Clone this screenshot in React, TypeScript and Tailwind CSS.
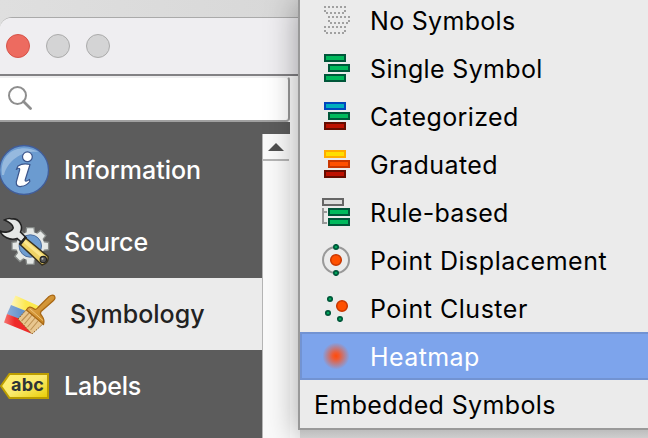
import type { ReactNode } from 'react';

function SearchIcon() {
  return (
    <svg width="26" height="26" viewBox="0 0 26 26" fill="none" stroke="#8e8e8e">
      <circle cx="11.5" cy="9.5" r="8.5" strokeWidth="2" />
      <path d="M17.5 15.5 L24.5 22.5" strokeWidth="2.8" strokeLinecap="round" />
    </svg>
  );
}

function InfoIcon() {
  return (
    <svg width="56" height="56" viewBox="0 0 56 56">
      <circle cx="24" cy="28" r="24.5" fill="#6b9bd0" stroke="#415d99" strokeWidth="1.3" />
      <path d="M2 33 C-1 10 20 0 39 10 C24 8 8 17 4 33 Z" fill="#96b9de" />
      <g stroke="#3c568c" strokeWidth="1.2" fill="#fff" strokeLinejoin="round">
        <circle cx="27.4" cy="14.8" r="4.9" />
        <path d="M18 24 C21 22 26 21.5 30 22.5 L25.3 37.5 C24.6 40 26.5 39.5 29.5 37.5 L29.8 39.5 C26 44.5 15.5 47.5 16.3 40 L19.6 28 C20.1 25.5 18.3 26 16.3 27.4 Z" />
      </g>
    </svg>
  );
}

const TEETH = [0, 45, 90, 135, 180, 225, 270, 315];

function SourceIcon() {
  return (
    <svg width="56" height="56" viewBox="0 0 56 56">
      <g transform="translate(30.3 32)">
        {TEETH.map((a) => (
          <path key={a} transform={`rotate(${a})`} d="M-4.5 -12 L-3.7 -18.3 H3.7 L4.5 -12 Z" fill="#e5e8e6" stroke="#858987" strokeWidth="1.3" />
        ))}
        <circle r="14" fill="#e5e8e6" />
        <circle r="11.2" fill="#6f9dd0" stroke="#4d6e9d" />
      </g>
      <path d="M12 5 C19 4 23.5 12 20.5 18 L26 23.5 L22 28.5 L17 24.5 C10 27 2 22.5 0 17 C4 19 11 18.5 13 14.5 C14 11 9 8 4.5 6 C7 4.5 10 4.3 12 5 Z" fill="#e5e7e6" stroke="#222" strokeWidth="1.6" />
      <path d="M25 23.5 L48 42.5 Q49 49 42 51 L19.5 30 Z" fill="#efd365" stroke="#39311d" strokeWidth="1.5" />
      <path d="M23.5 26.5 L43 43" stroke="#fbe68c" strokeWidth="3" />
      <path d="M26 23 L20 30.5" stroke="#242424" strokeWidth="2.4" />
      <circle cx="43.3" cy="45.5" r="3.2" fill="#555" stroke="#222" strokeWidth="1.2" />
      <circle cx="42.5" cy="44.8" r="1" fill="#bbb" />
    </svg>
  );
}

function BrushIcon() {
  return (
    <svg className="relative top-px" width="62" height="56" viewBox="0 0 62 56">
      <defs>
        <linearGradient id="yellowPaint"><stop stopColor="#fff6bd" /><stop offset=".5" stopColor="#fce94f" /></linearGradient>
        <linearGradient id="bluePaint"><stop stopColor="#8cadd6" /><stop offset=".5" stopColor="#6593cb" /></linearGradient>
        <linearGradient id="redPaint"><stop stopColor="#f57571" /><stop offset=".4" stopColor="#ef2929" /></linearGradient>
        <linearGradient id="wood" x1="0" y1="0" x2="1" y2="1"><stop stopColor="#e8b05a" /><stop offset="1" stopColor="#bd7910" /></linearGradient>
      </defs>
      <path d="M15.5 8.5 L41 20 L35 28 L11 18 Z" fill="url(#yellowPaint)" />
      <path d="M11 18 L36 28 L28 37 L7 27 Z" fill="url(#bluePaint)" />
      <path d="M7 27 L28 35 L31 46.5 L4 35.5 Z" fill="url(#redPaint)" />
      <path d="M18 32 L27 22 L44 36 L32 47 Z" fill="#e8c68f" stroke="#8e5b19" strokeDasharray="1.5 1" />
      <path d="M21.5 34 L29 26 M24.5 37 L32 28 M27.5 40 L35 31 M30.5 43 L38 34" stroke="#bd9153" strokeWidth="1.1" />
      <path d="M26.5 23 Q29 18 33.5 21.5 Q36 23.5 38 20.5 L49 9.5 Q52.500 7 54.500 9 Q56 11.500 53 14 L41 24.500 Q39.500 27 42 29 Q45 33 43.500 37.500 Z" fill="url(#wood)" stroke="#a86714" strokeWidth="1.2" />
      <path d="M30 22 L43 33.500" stroke="#f0c47b" strokeWidth="1" />
    </svg>
  );
}

function TagIcon() {
  return (
    <div className="relative flex h-7 w-14 items-center">
      <svg className="absolute left-0 top-0" width="56" height="28" viewBox="0 0 56 28">
        <defs>
          <linearGradient id="tag" x1="0" y1="0" x2="1" y2="1"><stop stopColor="#fff071" /><stop offset=".5" stopColor="#fbeb70" /><stop offset="1" stopColor="#e8cc00" /></linearGradient>
        </defs>
        <path d="M1 14 L9.5 2 H48 V26 H9.5 Z" fill="url(#tag)" stroke="#bd9e00" strokeWidth="2" />
      </svg>
      <span className="relative -top-px ml-[11px] text-[18px] leading-none font-bold tracking-[0.2px] text-[#2e3436]">abc</span>
    </div>
  );
}

function Bars({ colors }: { colors: [string, string][] }) {
  return (
    <svg width="28" height="28" viewBox="0 0 28 28">
      {colors.map(([fill, stroke], i) => (
        <rect key={i} x={i === 1 ? 7 : 3} y={1 + i * 10} width="20" height="6" fill={fill} stroke={stroke} strokeWidth="2" />
      ))}
    </svg>
  );
}

function NoSymbolsIcon() {
  return (
    <svg width="28" height="28" viewBox="0 0 28 28" fill="none" stroke="#a0a0a0" strokeWidth="2" strokeDasharray="2 2">
      <path d="M2 1 H24 M2 5 H4 M22 5 H24 M4 7 H24 M6 11 H28 M6 15 H8 M26 15 H28 M8 17 H28 M2 21 H24 M2 25 H4 M22 25 H24 M4 27 H24" />
    </svg>
  );
}

function RuleIcon() {
  return (
    <svg width="28" height="28" viewBox="0 0 28 28" strokeWidth="2">
      <rect x="1" y="1" width="20" height="6" fill="#ddd" stroke="#666" />
      <path d="M1 10 V25 H5 M1 14 H5" fill="none" stroke="#999" />
      <rect x="7" y="11" width="20" height="6" fill="#00b95c" stroke="#00573a" />
      <rect x="7" y="21" width="20" height="6" fill="#00b95c" stroke="#00573a" />
    </svg>
  );
}

function DisplacementIcon() {
  return (
    <svg width="28" height="32" viewBox="0 0 28 32">
      <circle cx="14" cy="16" r="13" fill="none" stroke="#999" strokeWidth="2" />
      <circle cx="14" cy="16" r="5.3" fill="#ff5000" stroke="#c93700" strokeWidth="1.5" />
      <circle cx="14" cy="3" r="2.2" fill="#00a55a" stroke="#00573a" strokeWidth="1.7" />
      <circle cx="14" cy="29" r="2.2" fill="#00a55a" stroke="#00573a" strokeWidth="1.7" />
    </svg>
  );
}

function ClusterIcon() {
  return (
    <svg width="28" height="28" viewBox="0 0 28 28">
      <circle cx="20" cy="12" r="5.3" fill="#ff5000" stroke="#c93700" strokeWidth="1.5" />
      {[[8, 5], [6, 19], [18, 25]].map(([x, y]) => (
        <circle key={x} cx={x} cy={y} r="2.2" fill="#00a55a" stroke="#00573a" strokeWidth="1.7" />
      ))}
    </svg>
  );
}

function HeatIcon() {
  return (
    <svg width="28" height="28" viewBox="0 0 28 28">
      <defs>
        <radialGradient id="heat"><stop stopColor="#ff4b0a" /><stop offset=".25" stopColor="#f05a30" /><stop offset="1" stopColor="#f05a30" stopOpacity="0" /></radialGradient>
      </defs>
      <circle cx="14" cy="14" r="13.5" fill="url(#heat)" />
    </svg>
  );
}

const green: [string, string] = ['#00b95c', '#00573a'];
const red: [string, string] = ['#bd1000', '#650c00'];

const menu: { label: string; icon: ReactNode; spacing: string; selected?: boolean }[] = [
  { label: 'No Symbols', icon: <NoSymbolsIcon />, spacing: 'tracking-[0.3px]' },
  { label: 'Single Symbol', icon: <Bars colors={[green, green, green]} />, spacing: 'tracking-[0.35px]' },
  { label: 'Categorized', icon: <Bars colors={[['#00aebd', '#0046bd'], green, red]} />, spacing: 'tracking-[0.4px]' },
  { label: 'Graduated', icon: <Bars colors={[['#ffdf00', '#ffac00'], ['#ff5000', '#c93700'], red]} />, spacing: 'tracking-[0.45px]' },
  { label: 'Rule-based', icon: <RuleIcon />, spacing: 'tracking-[0.3px]' },
  { label: 'Point Displacement', icon: <DisplacementIcon />, spacing: 'tracking-[0.52px]' },
  { label: 'Point Cluster', icon: <ClusterIcon />, spacing: 'tracking-[0.52px]' },
  { label: 'Heatmap', icon: <HeatIcon />, spacing: 'tracking-[0.4px]', selected: true },
];

const tabs: { label: string; icon: ReactNode; spacing: string; selected?: boolean }[] = [
  { label: 'Information', icon: <InfoIcon />, spacing: 'tracking-[0px]' },
  { label: 'Source', icon: <SourceIcon />, spacing: 'tracking-[-0.1px]' },
  { label: 'Symbology', icon: <BrushIcon />, spacing: 'tracking-[0px]', selected: true },
  { label: 'Labels', icon: <TagIcon />, spacing: 'tracking-[-0.2px]' },
];

export default function App() {
  return (
    <div className="relative h-[438px] w-[648px] overflow-hidden bg-linear-to-r from-[#dfdfdf] to-[#cfcfcf] pt-[17px] font-['Inter','Liberation_Sans',sans-serif] text-[25px]">
      <div className="h-[421px] overflow-hidden rounded-tl-[12px] border-t border-[#aaa] bg-white">
        <header className="flex h-[58px] items-center gap-4 border-b-2 border-[#828184] bg-[#efeef1] pl-1.5">
          <span className="size-6 rounded-full border border-[#d65349] bg-[#ed6b60]" />
          <span className="size-6 rounded-full border border-[#ababab] bg-[#d4d4d5]" />
          <span className="size-6 rounded-full border border-[#ababab] bg-[#d4d4d5]" />
        </header>
        <div className="flex h-[46px] w-[290px] items-center rounded-r border-t-2 border-r-2 border-b-2 border-t-[#efeff0] border-r-[#999] border-b-[#a0a0a0] bg-white pl-1.5">
          <SearchIcon />
        </div>
        <div className="h-3 w-[290px] bg-[#5c5c5c]" />
        <div className="flex h-[304px]">
          <nav className="w-[262px] bg-[#5c5c5c] font-medium">
            {tabs.map((t) => (
              <div key={t.label} className={t.selected ? 'flex h-[72px] items-center bg-[#ebebeb] text-[#222]' : 'flex h-[72px] items-center text-white'}>
                <div className={t.selected ? 'w-[70px]' : 'w-16'}>{t.icon}</div>
                <span className={`pt-0.5 ${t.spacing}`}>{t.label}</span>
              </div>
            ))}
          </nav>
          <div className="w-7 border-l border-[#b5b5b5] bg-[#fafafa]">
            <div className="flex h-[27px] w-[26px] items-center justify-center border-b-2 border-[#b5b5b5]">
              <svg width="16" height="8" viewBox="0 0 16 8"><path d="M8 0 L16 8 H0 Z" fill="#505050" /></svg>
            </div>
          </div>
        </div>
      </div>
      <div className="absolute -top-1.5 left-[298px] h-[436px] w-[370px] border-2 border-[#999] bg-[#ebebeb] text-black shadow-[0_8px_30px_rgba(0,0,0,0.36)]">
        {menu.map((m) => (
          <div key={m.label} className={m.selected ? 'flex h-12 items-center border-2 border-[#7293d2] bg-[#7da4ec] pl-5 text-white' : 'flex h-12 items-center pl-[22px]'}>
            <div className="flex w-[48px] items-center">{m.icon}</div>
            <span className={`pt-[3px] ${m.spacing}`}>{m.label}</span>
          </div>
        ))}
        <div className="flex h-12 items-center pt-[3px] pl-3.5 tracking-[0.37px]">Embedded Symbols</div>
      </div>
      <div className="absolute bottom-0 left-[300px] h-2 w-[348px] bg-linear-to-b from-[#bdbdbd] to-[#cecece]" />
    </div>
  );
}
